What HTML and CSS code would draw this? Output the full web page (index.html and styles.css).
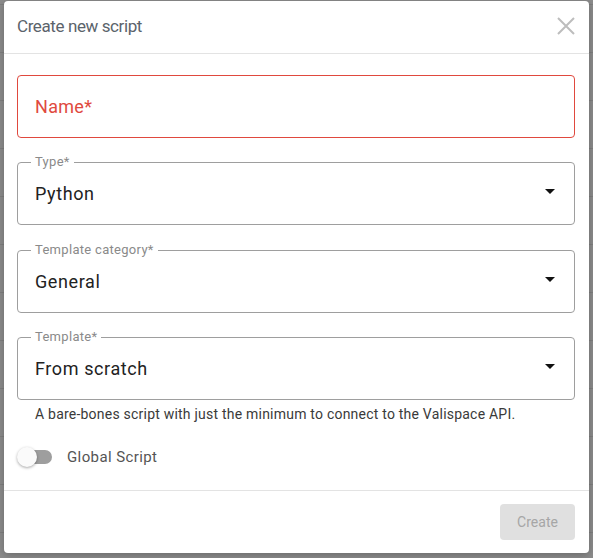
FILE: index.html
```html
<!DOCTYPE html>
<html lang="en">
<head>
    <meta charset="UTF-8">
    <meta name="viewport" content="width=device-width, initial-scale=1.0">
    <title>Create new script</title>
    <link rel="stylesheet" href="styles.css">
</head>
<body>
    <div class="dialog">
        <div class="dialog-header">
            <h2 class="dialog-title">Create new script</h2>
            <button class="close-btn" aria-label="Close">
                <svg width="18" height="18" viewBox="0 0 18 18">
                    <path d="M1 1L17 17M17 1L1 17" stroke="#bdbdbd" stroke-width="2" fill="none"/>
                </svg>
            </button>
        </div>

        <div class="dialog-body">
            <div class="field error">
                <span class="placeholder">Name*</span>
            </div>

            <div class="field wide-gap">
                <span class="field-label">Type*</span>
                <span class="field-value">Python</span>
                <svg class="arrow" width="24" height="24" viewBox="0 0 24 24"><path d="M7 10l5 5 5-5z"/></svg>
            </div>

            <div class="field">
                <span class="field-label">Template category*</span>
                <span class="field-value">General</span>
                <svg class="arrow" width="24" height="24" viewBox="0 0 24 24"><path d="M7 10l5 5 5-5z"/></svg>
            </div>

            <div class="field last">
                <span class="field-label">Template*</span>
                <span class="field-value">From scratch</span>
                <svg class="arrow" width="24" height="24" viewBox="0 0 24 24"><path d="M7 10l5 5 5-5z"/></svg>
            </div>
            <div class="helper">A bare-bones script with just the minimum to connect to the Valispace API.</div>

            <label class="switch-row">
                <span class="switch">
                    <span class="switch-track"></span>
                    <span class="switch-thumb"></span>
                </span>
                <span class="switch-label">Global Script</span>
            </label>
        </div>

        <div class="dialog-footer">
            <button class="btn-create" disabled>Create</button>
        </div>
    </div>
</body>
</html>
```

FILE: styles.css
```css
* {
    margin: 0;
    padding: 0;
    box-sizing: border-box;
}

body {
    font-family: Roboto, "Liberation Sans", sans-serif;
    background-color: #8c8c8c;
    background-image: repeating-linear-gradient(to bottom, transparent 0, transparent 4px, #7f7f7f 4px, #7f7f7f 5px, transparent 5px, transparent 48px);
    padding: 1px 4px 5px 4px;
    height: 558px;
    overflow: hidden;
}

.dialog {
    background: white;
    border-radius: 4px;
    height: 552px;
    display: flex;
    flex-direction: column;
    box-shadow: 0 2px 8px rgba(0,0,0,0.25);
}

.dialog-header {
    height: 53px;
    display: flex;
    align-items: center;
    justify-content: space-between;
    padding: 0 14px 0 13px;
    border-bottom: 1px solid #e3e3e3;
}

.dialog-title {
    font-size: 17px;
    font-weight: 400;
    color: #5b636b;
    letter-spacing: -0.4px;
    padding-bottom: 2px;
}

.close-btn {
    background: none;
    border: none;
    width: 18px;
    height: 18px;
    cursor: pointer;
    margin-bottom: 2px;
}

.dialog-body {
    flex: 1;
    padding: 21px 14px 0 13px;
}

.field {
    position: relative;
    height: 63px;
    border: 1px solid #9e9e9e;
    border-radius: 4px;
    display: flex;
    align-items: center;
    padding: 0 12px 0 17px;
    margin-bottom: 24px;
}

.field.error {
    border-color: #e0493e;
}

.field.wide-gap {
    margin-bottom: 25px;
}

.field.last {
    margin-bottom: 0;
}

.placeholder {
    color: #e0493e;
    font-size: 18px;
    letter-spacing: 0.3px;
}

.field-label {
    position: absolute;
    top: -9px;
    left: 13px;
    padding: 0 4px;
    background: white;
    font-size: 13px;
    color: #8a8a8a;
    letter-spacing: 0.3px;
}

.field-value {
    flex: 1;
    font-size: 18px;
    color: #222;
    letter-spacing: 0.6px;
}

.arrow {
    fill: #111;
    margin-top: -6px;
}

.helper {
    padding: 6px 0 0 18px;
    font-size: 14px;
    color: #3a3a3a;
    letter-spacing: 0.22px;
}

.switch-row {
    display: flex;
    align-items: center;
    margin-top: 24px;
    cursor: pointer;
}

.switch {
    position: relative;
    width: 35px;
    height: 22px;
    margin-right: 15px;
}

.switch-track {
    position: absolute;
    left: 5px;
    top: 4px;
    width: 30px;
    height: 14px;
    border-radius: 7px;
    background: #9e9e9e;
}

.switch-thumb {
    position: absolute;
    left: 0;
    top: 1px;
    width: 20px;
    height: 20px;
    border-radius: 50%;
    background: #fafafa;
    box-shadow: 0 1px 3px rgba(0,0,0,0.35);
}

.switch-label {
    font-size: 15px;
    color: #555;
    letter-spacing: 0.4px;
}

.dialog-footer {
    height: 63px;
    border-top: 1px solid #e3e3e3;
    display: flex;
    justify-content: flex-end;
    align-items: flex-start;
    padding: 13px 14px 0 0;
}

.btn-create {
    width: 75px;
    height: 36px;
    border: none;
    border-radius: 4px;
    background: #e0e0e0;
    color: #a6a6a6;
    font-family: Roboto, "Liberation Sans", sans-serif;
    font-size: 14px;
}
```
